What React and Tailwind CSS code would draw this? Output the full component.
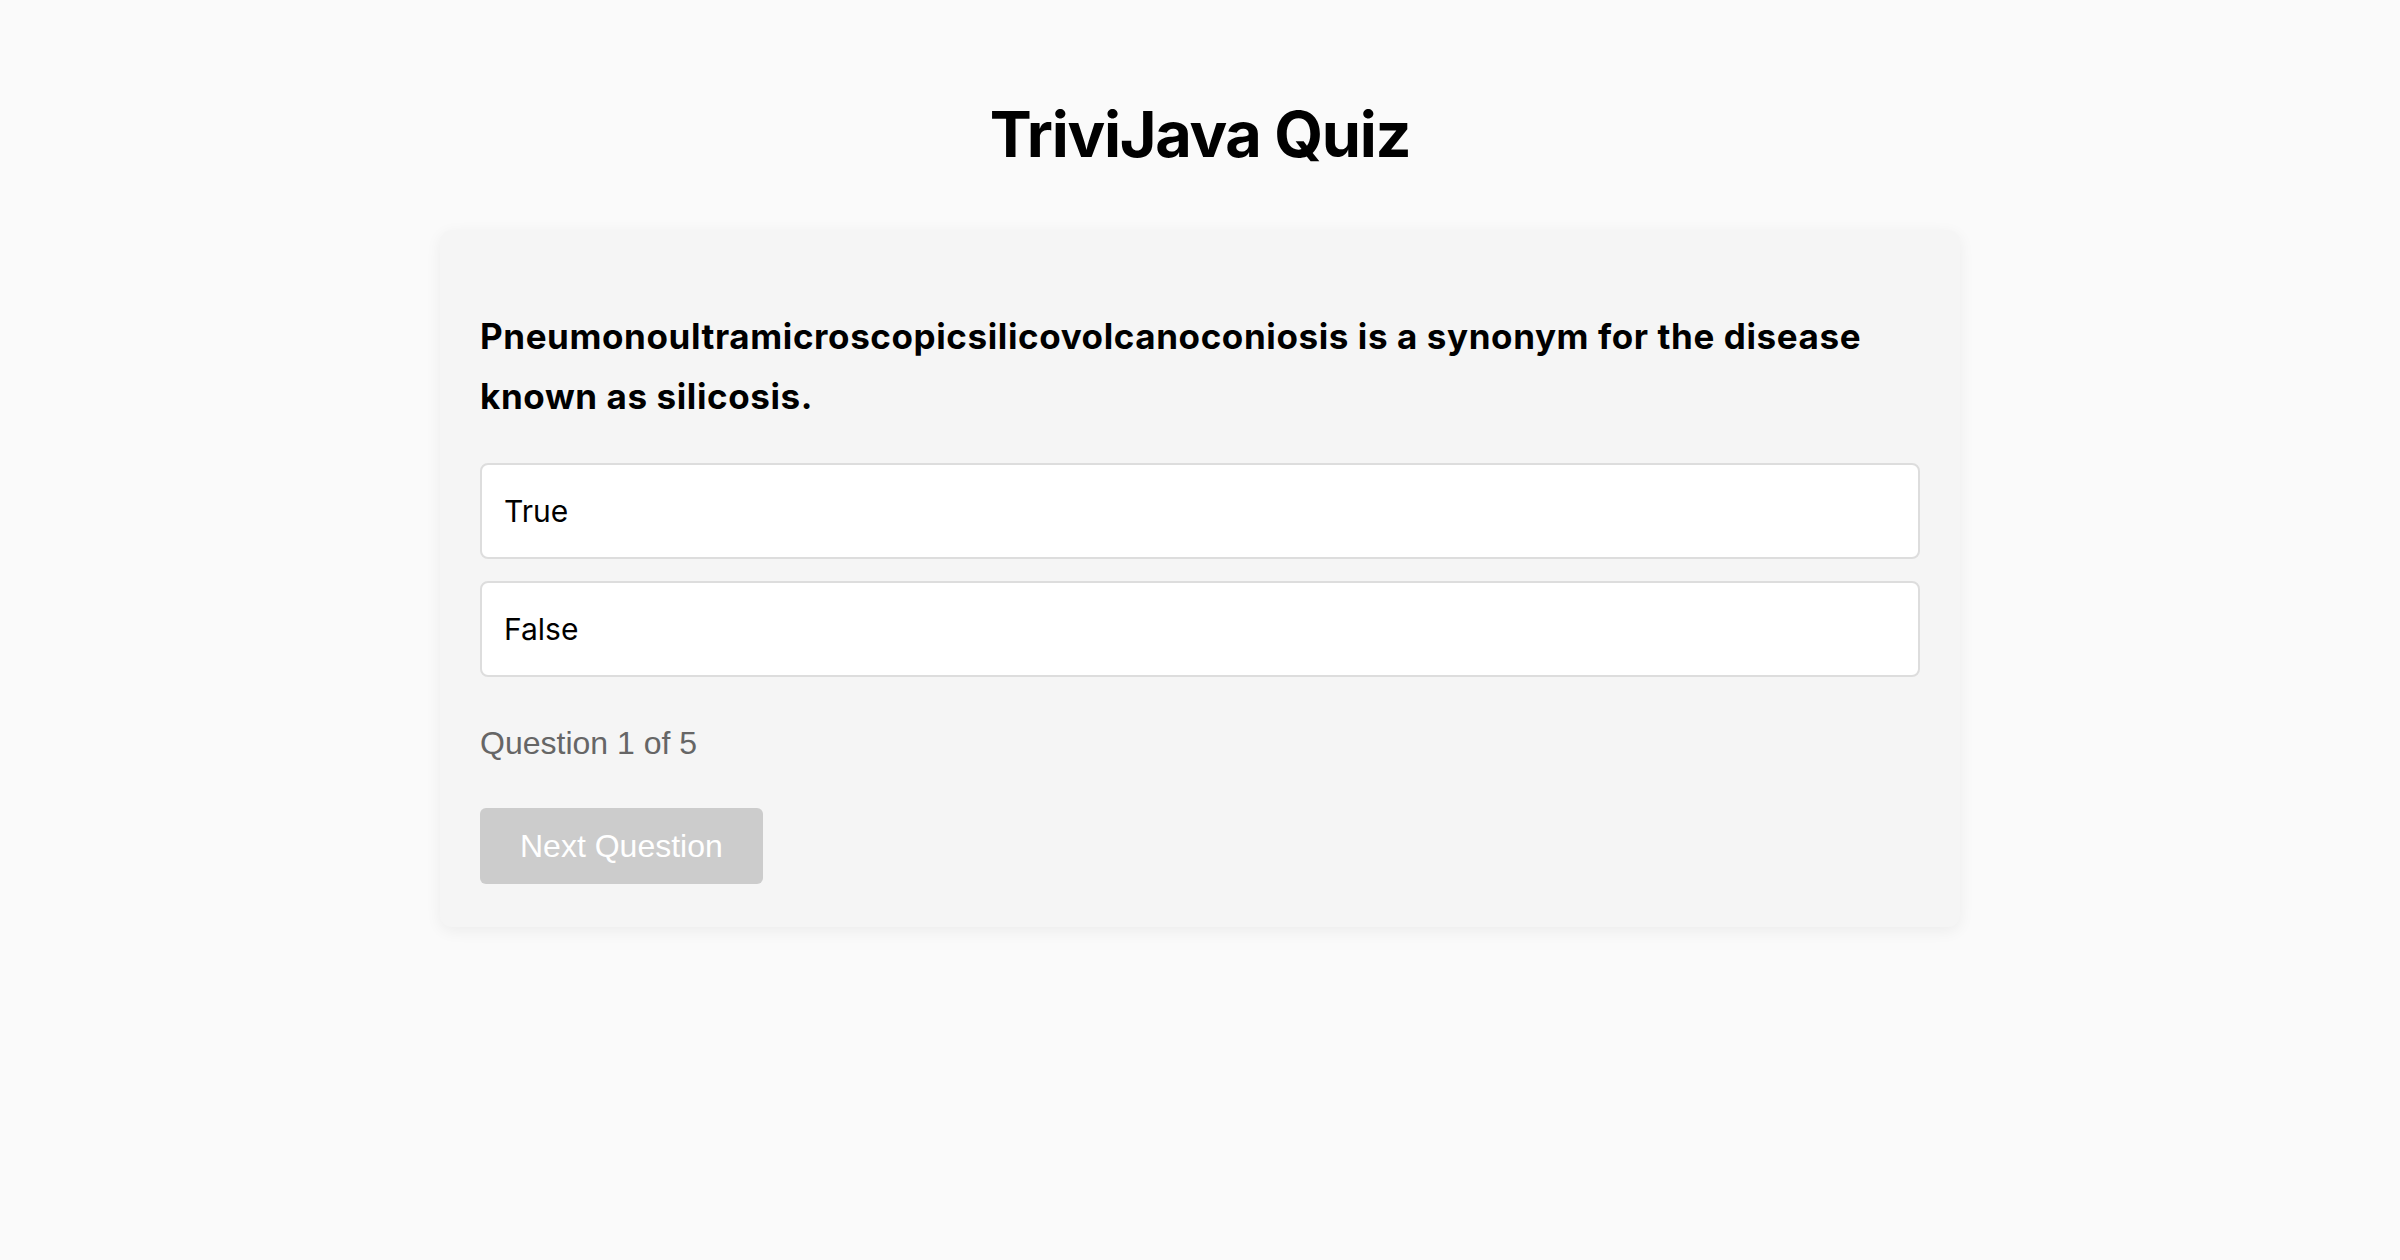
import { useState } from 'react';

const questions = [
  {
    question: 'Pneumonoultramicroscopicsilicovolcanoconiosis is a synonym for the disease known as silicosis.',
    answers: ['True', 'False'],
  },
];

export default function App() {
  const [current] = useState(0);
  const [selected, setSelected] = useState(null);
  const q = questions[current];

  return (
    <div className="min-h-screen bg-[#fafafa] pt-[94px] font-['Inter',sans-serif] text-black">
      <h1 className="text-center text-[63px] font-bold leading-[80px] tracking-[-1.3px]">TriviJava Quiz</h1>

      <div className="mx-auto mt-[56px] w-[1520px] rounded-[12px] bg-[#f5f5f5] px-[40px] pb-[43px] pt-[76px] shadow-[0_4px_16px_rgba(0,0,0,0.06)]">
        <h2 className="mb-[37px] text-[35px] font-bold leading-[60px] tracking-[0.6px]">{q.question}</h2>

        <div className="flex flex-col gap-[22px]">
          {q.answers.map((answer, i) => (
            <button
              key={answer}
              onClick={() => setSelected(i)}
              className={`h-[96px] w-full rounded-[8px] border-2 border-[#ddd] bg-white px-[22px] text-left text-[30px] ${
                selected === i ? 'border-[#999]' : ''
              }`}
            >
              {answer}
            </button>
          ))}
        </div>

        <p className="mt-[48px] font-['Liberation_Sans',Arial,sans-serif] text-[32px] leading-[37px] text-[#666]">
          Question {current + 1} of 5
        </p>

        <button
          disabled={selected === null}
          className="mt-[46px] h-[76px] rounded-[6px] bg-[#ccc] px-[40px] font-['Liberation_Sans',Arial,sans-serif] text-[32px] text-white"
        >
          Next Question
        </button>
      </div>
    </div>
  );
}
